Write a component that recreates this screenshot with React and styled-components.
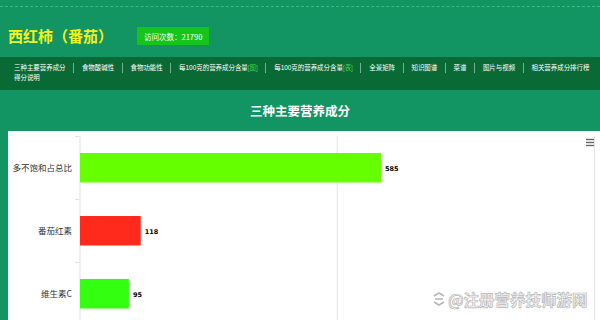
import React from "react";
import styled, { createGlobalStyle } from "styled-components";

const Global = createGlobalStyle`
  html, body { margin: 0; padding: 0; }
  body {
    background: #129463;
    font-family: "Noto Sans CJK SC", "Noto Sans", sans-serif;
    overflow: hidden;
  }
`;

const Page = styled.div`
  width: 600px;
  min-height: 320px;
  background: #129463;
`;

const Header = styled.header`
  height: 57px;
  box-sizing: border-box;
  padding-top: 6px;
`;

const Dashed = styled.div`
  border-top: 1px dashed #3fc784;
  opacity: 0.8;
`;

const TitleRow = styled.div`
  display: flex;
  align-items: center;
  gap: 24px;
  padding: 19px 0 0 8px;
`;

const Title = styled.h1`
  margin: 0;
  font-size: 15px;
  font-weight: 700;
  line-height: 20px;
  color: #f2f21c;
`;

const Badge = styled.span`
  display: inline-flex;
  align-items: center;
  height: 18px;
  padding: 0 7px;
  background: #17c41c;
  color: #fff;
  font-size: 7.5px;
  white-space: nowrap;
`;

const Nav = styled.nav`
  background: #0a6a35;
  padding: 6px 0 7px 14px;
  font-family: "Liberation Sans", "Noto Sans CJK SC", sans-serif;
  font-size: 6.45px;
  line-height: 10px;
  color: #fff;
  overflow: hidden;
`;

const NavRow = styled.div`
  display: flex;
  flex-wrap: nowrap;
`;

const NavItem = styled.span`
  flex: none;
  white-space: nowrap;
  padding: 0 7.5px 0 7.9px;
  border-left: 1px solid rgba(255, 255, 255, 0.45);
  &:first-child {
    padding-left: 0;
    border-left: none;
  }
`;

const NavTail = styled.div`
  white-space: nowrap;
`;

const Tag = styled.span`
  color: #3ed24a;
`;

const Heading = styled.h2`
  margin: 0;
  height: 41px;
  line-height: 41px;
  text-align: center;
  color: #fff;
  font-size: 12.5px;
  font-weight: 700;
`;

const Panel = styled.section`
  position: relative;
  margin-left: 8px;
  height: 200px;
  background: #fff;
`;

const Chart = styled.svg`
  display: block;
`;

const Watermark = styled.div`
  position: absolute;
  left: 424px;
  top: 157px;
  display: flex;
  align-items: center;
  gap: 2px;
  font-size: 15.5px;
  font-weight: 700;
  color: #f4f4f4;
  -webkit-text-stroke: 0.7px #b8b8b8;
  white-space: nowrap;
`;

const navItems = [
  ["三种主要营养成分"],
  ["食物酸碱性"],
  ["食物功能性"],
  ["每100克的营养成分含量", "[图]"],
  ["每100克的营养成分含量", "[表]"],
  ["全景矩阵"],
  ["知识图谱"],
  ["菜谱"],
  ["图片与视频"],
  ["相关营养成分排行榜"],
];

const data = [
  { name: "多不饱和占总比", value: 585, color: "#66ff00" },
  { name: "番茄红素", value: 118, color: "#ff2a1c" },
  { name: "维生素C", value: 95, color: "#33ff11" },
];

const AXIS_X = 72;
const SCALE = 0.5145;
const TOP = 5;
const BAND = 63;

export default function App() {
  return (
    <Page>
      <Global />
      <Header>
        <Dashed />
        <TitleRow>
          <Title>西红柿（番茄）</Title>
          <Badge>访问次数：21790</Badge>
        </TitleRow>
      </Header>
      <Nav>
        <NavRow>
          {navItems.map(([t, tag], i) => (
            <NavItem key={i}>
              {t}
              {tag && <Tag>{tag}</Tag>}
            </NavItem>
          ))}
        </NavRow>
        <NavTail>得分说明</NavTail>
      </Nav>
      <Heading>三种主要营养成分</Heading>
      <Panel>
        <Chart width="592" height="200" viewBox="0 0 592 200">
          <line x1={AXIS_X + 500 * SCALE} y1={TOP} x2={AXIS_X + 500 * SCALE} y2={200} stroke="#e6e6e6" strokeWidth="1" />
          <line x1={AXIS_X + 1000 * SCALE} y1={TOP} x2={AXIS_X + 1000 * SCALE} y2={200} stroke="#e6e6e6" strokeWidth="1" />
          <line x1={AXIS_X} y1={TOP} x2={AXIS_X} y2={200} stroke="#e3e3e3" strokeWidth="1" />
          {[0, 1, 2, 3].map((i) => (
            <line key={i} x1={AXIS_X - 5} y1={TOP + i * BAND + 0.5} x2={AXIS_X} y2={TOP + i * BAND + 0.5} stroke="#e3e3e3" strokeWidth="1" />
          ))}
          {data.map((d, i) => {
            const y = TOP + i * BAND + 17;
            const w = d.value * SCALE;
            return (
              <g key={d.name}>
                <rect x={AXIS_X} y={y} width={w} height={29.5} fill={d.color} />
                <text x={AXIS_X - 8} y={y + 18} textAnchor="end" fontSize="8.5" fill="#333" fontFamily='"Noto Sans CJK SC", sans-serif'>
                  {d.name}
                </text>
                <text x={AXIS_X + w + 4} y={y + 17.5} fontSize="6.5" fontWeight="700" fill="#000" fontFamily='"DejaVu Sans", sans-serif'>
                  {d.value}
                </text>
              </g>
            );
          })}
          <g stroke="#666" strokeWidth="1.4">
            <line x1="578" y1="8.5" x2="586" y2="8.5" />
            <line x1="578" y1="11.5" x2="586" y2="11.5" />
            <line x1="578" y1="14.5" x2="586" y2="14.5" />
          </g>
        </Chart>
        <Watermark>
          <svg width="14" height="14" viewBox="0 0 14 14">
            <path d="M2 4 L7 1 L12 4 M3 7 L11 7 M2 10 L7 13 L12 10" fill="none" stroke="#b8b8b8" strokeWidth="1.6" />
          </svg>
          <span>@注册营养技师游网</span>
        </Watermark>
      </Panel>
    </Page>
  );
}
